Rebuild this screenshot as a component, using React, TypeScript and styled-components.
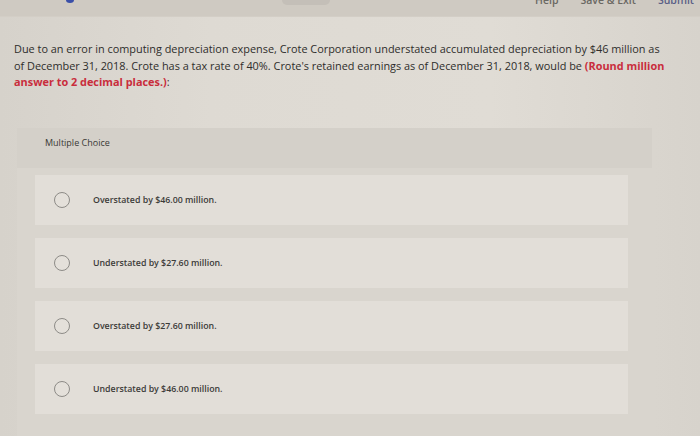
import React from "react";
import styled, { createGlobalStyle } from "styled-components";

const GlobalStyle = createGlobalStyle`
  html, body { margin: 0; padding: 0; }
  body {
    background: #dcd8d1;
    font-family: "Open Sans", "Liberation Sans", sans-serif;
    width: 700px;
    height: 436px;
    overflow: hidden;
  }
`;

const Page = styled.div`
  width: 700px;
  height: 436px;
  display: flex;
  flex-direction: column;
  background: linear-gradient(90deg, #d6d2cb 0%, #dedad3 30%, #e0dcd5 70%, #d7d3cc 100%);
`;

const TopBar = styled.div`
  height: 17px;
  flex: none;
  display: flex;
  align-items: flex-start;
  padding: 0 6px 0 66px;
  background: #cfcac2;
  border-bottom: 1px solid #d3cec6;
  box-sizing: border-box;
`;

const BlueDot = styled.span`
  width: 8px;
  height: 6px;
  margin-top: -3px;
  border-radius: 50%;
  background: #3a4fa8;
`;

const GrayTab = styled.span`
  width: 48px;
  height: 6px;
  margin: -1px 0 0 208px;
  border-radius: 0 0 5px 5px;
  background: #c4bfb8;
`;

const Nav = styled.nav`
  margin-left: auto;
  display: flex;
  gap: 22px;
`;

const NavItem = styled.span<{ $accent?: boolean }>`
  margin-top: -6px;
  font-size: 10.5px;
  line-height: 12px;
  font-weight: 600;
  color: ${(p) => (p.$accent ? "#5a5f86" : "#6a6863")};
`;

const Question = styled.p`
  margin: 24px 0 0 14px;
  width: 655px;
  font-size: 10.9px;
  line-height: 16.5px;
  color: #2e2d2b;
`;

const Hint = styled.strong`
  color: #c92d3c;
  font-weight: 700;
`;

const Panel = styled.section`
  margin: 37px 0 0 17px;
  width: 635px;
  flex: 1;
  display: flex;
  flex-direction: column;
  background: #d9d5ce;
`;

const PanelHeader = styled.div`
  height: 40px;
  box-sizing: border-box;
  padding: 8px 0 0 28px;
  background: #d4d0c9;
  font-size: 9px;
  color: #3a3936;
`;

const Options = styled.div`
  display: flex;
  flex-direction: column;
  gap: 13px;
  padding: 7px 24px 0 18px;
`;

const Option = styled.label`
  height: 50px;
  display: flex;
  align-items: center;
  padding-left: 19px;
  background: #e2ded8;
  cursor: pointer;
`;

const Radio = styled.span`
  width: 16px;
  height: 16px;
  box-sizing: border-box;
  border-radius: 50%;
  border: 1.3px solid #8d8b87;
  background: #e4e0da;
  flex: none;
`;

const OptionText = styled.span`
  margin-left: 23px;
  font-size: 8.8px;
  font-weight: 600;
  color: #3c3b38;
`;

const choices = [
  "Overstated by $46.00 million.",
  "Understated by $27.60 million.",
  "Overstated by $27.60 million.",
  "Understated by $46.00 million.",
];

export default function App() {
  return (
    <>
      <GlobalStyle />
      <Page>
        <TopBar>
          <BlueDot />
          <GrayTab />
          <Nav>
            <NavItem>Help</NavItem>
            <NavItem>Save &amp; Exit</NavItem>
            <NavItem $accent>Submit</NavItem>
          </Nav>
        </TopBar>
        <Question>
          Due to an error in computing depreciation expense, Crote Corporation understated accumulated
          depreciation by $46 million as of December 31, 2018. Crote has a tax rate of 40%. Crote's
          retained earnings as of December 31, 2018, would be{" "}
          <Hint>(Round million answer to 2 decimal places.)</Hint>:
        </Question>
        <Panel>
          <PanelHeader>Multiple Choice</PanelHeader>
          <Options>
            {choices.map((c) => (
              <Option key={c}>
                <Radio />
                <OptionText>{c}</OptionText>
              </Option>
            ))}
          </Options>
        </Panel>
      </Page>
    </>
  );
}
